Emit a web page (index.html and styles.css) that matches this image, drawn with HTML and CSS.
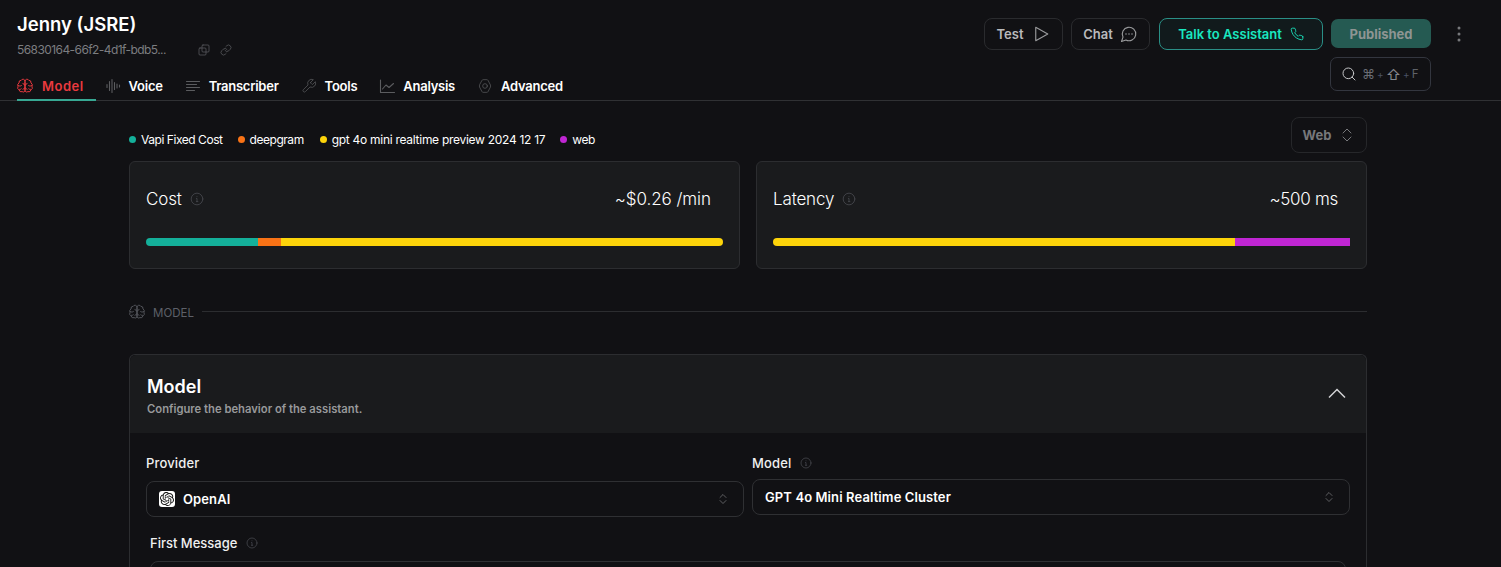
FILE: index.html
```html
<!DOCTYPE html>
<html lang="en">
<head>
<meta charset="utf-8">
<title>Jenny (JSRE)</title>
<link rel="stylesheet" href="styles.css">
</head>
<body>
<svg class="defs" width="0" height="0" aria-hidden="true">
  <symbol id="brain" viewBox="0 0 24 24"><path d="M12 4.500a3 3 0 0 0-5.600-1.100 3.500 3.500 0 0 0-3.400 4 4.200 4.200 0 0 0-1.500 5.300 3.900 3.900 0 0 0 1.600 5.200 3.600 3.600 0 0 0 4.600 2.600A3 3 0 0 0 12 19.500Z"/><path d="M12 4.500a3 3 0 0 1 5.600-1.100 3.500 3.500 0 0 1 3.400 4 4.200 4.200 0 0 1 1.500 5.300 3.900 3.900 0 0 1-1.600 5.200 3.600 3.600 0 0 1-4.600 2.600A3 3 0 0 1 12 19.500Z"/><path d="M12 10.500c-1.500 0-2.500-.8-3-2.500M12 10.500c1.500 0 2.500-.8 3-2.500"/><path d="M12 15c-1.300 0-2.300.6-3 2M12 15c1.300 0 2.300.6 3 2"/><path d="M2 11.500c1.500.8 3.200.8 4.500 0M22 11.500c-1.500.8-3.200.8-4.500 0"/><path d="M3.500 17c1 .2 2 0 2.800-.7M20.500 17c-1 .2-2 0-2.800-.7"/></symbol>
  <symbol id="info" viewBox="0 0 24 24"><circle cx="12" cy="12" r="10"/><path d="M12 16.500v-5.500h-1"/><path d="M11 16.500h2.500"/><path d="M12 7.500h.01"/></symbol>
  <symbol id="updown" viewBox="0 0 24 24"><path d="m6 15 6 6 6-6"/><path d="m6 9 6-6 6 6"/></symbol>
</svg>

<header class="topbar">
  <div class="topbar-left">
    <h1 class="title">Jenny (JSRE)</h1>
    <div class="id-row">
      <span class="id-text">56830164-66f2-4d1f-bdb5...</span>
      <svg class="ic ic-12" viewBox="0 0 24 24"><rect x="8" y="2" width="14" height="14" rx="2"/><rect x="2" y="8" width="14" height="14" rx="2"/></svg>
      <svg class="ic ic-12" viewBox="0 0 24 24"><path d="M10 13a5 5 0 0 0 7.540.540l3-3a5 5 0 0 0-7.070-7.070l-1.720 1.710"/><path d="M14 11a5 5 0 0 0-7.540-.540l-3 3a5 5 0 0 0 7.070 7.070l1.710-1.710"/></svg>
    </div>
    <nav class="tabs">
      <a class="tab tab-active"><svg class="ic ic-16"><use href="#brain"/></svg>Model</a>
      <a class="tab"><svg class="ic ic-16 ic-thin" viewBox="0 0 16 16"><path d="M2 6.500v3M4.500 3.500v9M7 1.500v13M9.500 4.500v7M12 6v4M14.500 7v2"/></svg>Voice</a>
      <a class="tab"><svg class="ic ic-16 ic-thin" viewBox="0 0 16 16"><path d="M1.500 3.500h13M1.500 6.500h10M1.500 9.500h13M1.500 12.500h8"/></svg>Transcriber</a>
      <a class="tab"><svg class="ic ic-16 ic-thin" viewBox="0 0 24 24"><path d="M14.700 6.300a1 1 0 0 0 0 1.400l1.600 1.600a1 1 0 0 0 1.400 0l3.770-3.770a6 6 0 0 1-7.940 7.940l-6.910 6.910a2.120 2.120 0 0 1-3-3l6.910-6.910a6 6 0 0 1 7.940-7.940l-3.760 3.760z"/></svg>Tools</a>
      <a class="tab"><svg class="ic ic-16 ic-thin" viewBox="0 0 16 16"><path d="M1.500 2v12.500h14"/><path d="M3.500 11l3.500-4 3 2.500 4.500-4"/></svg>Analysis</a>
      <a class="tab"><svg class="ic ic-16 ic-thin" viewBox="0 0 24 24"><path d="M7.500 3.500c.4-.7 1-1 1.700-1h5.600c.7 0 1.300.3 1.700 1l3.700 7c.3.900.3 2 0 3l-3.700 7c-.4.700-1 1-1.700 1H9.200c-.7 0-1.300-.3-1.700-1l-3.700-7c-.3-1-.3-2.100 0-3z"/><circle cx="12" cy="12" r="3.500"/></svg>Advanced</a>
    </nav>
  </div>
  <div class="topbar-right">
    <div class="actions">
      <button class="btn btn-outline">Test<svg class="ic ic-18 ic-play" viewBox="0 0 24 24"><path d="M5 3l16 9-16 9z"/></svg></button>
      <button class="btn btn-outline btn-chat">Chat<svg class="ic ic-18 ic-play" viewBox="0 0 24 24"><path d="M7.900 20A9 9 0 1 0 4 16.100L2 22z"/><path d="M8 12h.01M12 12h.01M16 12h.01" stroke-width="2"/></svg></button>
      <button class="btn btn-talk">Talk to Assistant<svg class="ic ic-14" viewBox="0 0 24 24"><path d="M22 16.920v3a2 2 0 0 1-2.180 2 19.790 19.790 0 0 1-8.630-3.070 19.500 19.500 0 0 1-6-6 19.790 19.790 0 0 1-3.070-8.670A2 2 0 0 1 4.110 2h3a2 2 0 0 1 2 1.720c.127.960.361 1.903.700 2.810a2 2 0 0 1-.450 2.110L8.090 9.910a16 16 0 0 0 6 6l1.270-1.270a2 2 0 0 1 2.110-.450c.907.339 1.850.573 2.810.700A2 2 0 0 1 22 16.920z"/></svg></button>
      <button class="btn-published">Published</button>
      <svg class="kebab" viewBox="0 0 4 16" width="4" height="16"><circle cx="2" cy="2" r="1.500"/><circle cx="2" cy="8" r="1.500"/><circle cx="2" cy="14" r="1.500"/></svg>
    </div>
    <div class="search">
      <svg class="ic ic-search" viewBox="0 0 24 24"><circle cx="11" cy="11" r="8"/><path d="m21 21-4.300-4.300"/></svg>
      <span class="keys"><span class="key-cmd">⌘</span><span class="key-plus">+</span><span class="key-shift">⇧</span><span class="key-plus">+</span><span class="key-f">F</span></span>
    </div>
  </div>
</header>

<main class="content">
  <div class="legend-row">
    <ul class="legend">
      <li><span class="dot dot-teal"></span>Vapi Fixed Cost</li>
      <li><span class="dot dot-orange"></span>deepgram</li>
      <li class="legend-long"><span class="dot dot-yellow"></span>gpt 4o mini realtime preview 2024 12 17</li>
      <li><span class="dot dot-purple"></span>web</li>
    </ul>
    <button class="web-select">Web<svg class="ic ic-16"><use href="#updown"/></svg></button>
  </div>

  <section class="metrics">
    <article class="metric">
      <div class="metric-head">
        <span class="metric-name">Cost<svg class="ic ic-14 ic-info"><use href="#info"/></svg></span>
        <span class="metric-value">~$0.26 /min</span>
      </div>
      <div class="bar bar-round">
        <span class="seg seg-teal" style="width:19.4%"></span><span class="seg seg-orange" style="width:4%"></span><span class="seg seg-yellow" style="width:76.6%"></span>
      </div>
    </article>
    <article class="metric">
      <div class="metric-head">
        <span class="metric-name">Latency<svg class="ic ic-14 ic-info"><use href="#info"/></svg></span>
        <span class="metric-value metric-value-tight">~500 ms</span>
      </div>
      <div class="bar bar-left">
        <span class="seg seg-yellow" style="width:80%"></span><span class="seg seg-purple" style="width:20%"></span>
      </div>
    </article>
  </section>

  <div class="divider">
    <svg class="ic ic-16"><use href="#brain"/></svg>
    <span class="divider-label">MODEL</span>
    <span class="divider-line"></span>
  </div>

  <section class="panel">
    <div class="panel-head">
      <div>
        <h2 class="panel-title">Model</h2>
        <p class="panel-sub">Configure the behavior of the assistant.</p>
      </div>
      <svg class="chevron" viewBox="0 0 20 12" width="20" height="12"><path d="M2 10.500 10 2.500l8 8"/></svg>
    </div>
    <div class="panel-body">
      <div class="fields">
        <div class="field">
          <label class="field-label field-label-provider">Provider</label>
          <div class="select select-provider">
            <span class="select-value">
              <span class="logo"><svg viewBox="0 0 24 24" width="14" height="14"><path d="M22.2819 9.8211a5.9847 5.9847 0 0 0-.5157-4.9108 6.0462 6.0462 0 0 0-6.5098-2.9A6.0651 6.0651 0 0 0 4.9807 4.1818a5.9847 5.9847 0 0 0-3.9977 2.9 6.0462 6.0462 0 0 0 .7427 7.0966 5.98 5.98 0 0 0 .511 4.9107 6.051 6.051 0 0 0 6.5146 2.9001A5.9847 5.9847 0 0 0 13.2599 24a6.0557 6.0557 0 0 0 5.7718-4.2058 5.9894 5.9894 0 0 0 3.9977-2.9001 6.0557 6.0557 0 0 0-.7475-7.0729zm-9.022 12.6081a4.4755 4.4755 0 0 1-2.8764-1.0408l.1419-.0804 4.7783-2.7582a.7948.7948 0 0 0 .3927-.6813v-6.7369l2.02 1.1686a.071.071 0 0 1 .038.052v5.5826a4.504 4.504 0 0 1-4.4945 4.4944zm-9.6607-4.1254a4.4708 4.4708 0 0 1-.5346-3.0137l.142.0852 4.783 2.7582a.7712.7712 0 0 0 .7806 0l5.8428-3.3685v2.3324a.0804.0804 0 0 1-.0332.0615L9.74 19.9502a4.4992 4.4992 0 0 1-6.1408-1.6464zM2.3408 7.8956a4.485 4.485 0 0 1 2.3655-1.9728V11.6a.7664.7664 0 0 0 .3879.6765l5.8144 3.3543-2.0201 1.1685a.0757.0757 0 0 1-.071 0l-4.8303-2.7865A4.504 4.504 0 0 1 2.3408 7.872zm16.5963 3.8558L13.1038 8.364 15.1192 7.2a.0757.0757 0 0 1 .071 0l4.8303 2.7913a4.4944 4.4944 0 0 1-.6765 8.1042v-5.6772a.79.79 0 0 0-.407-.667zm2.0107-3.0231l-.142-.0852-4.7735-2.7818a.7759.7759 0 0 0-.7854 0L9.409 9.2297V6.8974a.0662.0662 0 0 1 .0284-.0615l4.8303-2.7866a4.4992 4.4992 0 0 1 6.6802 4.66zM8.3065 12.863l-2.02-1.1638a.0804.0804 0 0 1-.038-.0567V6.0742a4.4992 4.4992 0 0 1 7.3757-3.4537l-.142.0805L8.704 5.459a.7948.7948 0 0 0-.3927.6813zm1.0976-2.3654l2.602-1.4998 2.6069 1.4998v2.9994l-2.5974 1.4997-2.6067-1.4997Z"/></svg></span>
              OpenAI
            </span>
            <svg class="ic ic-12 ic-updown"><use href="#updown"/></svg>
          </div>
        </div>
        <div class="field">
          <label class="field-label">Model<svg class="ic ic-12 ic-info-sm"><use href="#info"/></svg></label>
          <div class="select">
            <span class="select-value">GPT 4o Mini Realtime Cluster</span>
            <svg class="ic ic-12 ic-updown"><use href="#updown"/></svg>
          </div>
        </div>
      </div>
      <div class="first-message">
        <label class="field-label">First Message<svg class="ic ic-12 ic-info-sm"><use href="#info"/></svg></label>
        <div class="textarea"></div>
      </div>
    </div>
  </section>
</main>
</body>
</html>
```

FILE: styles.css
```css
* { box-sizing: border-box; }
html, body { margin: 0; height: 567px; overflow: hidden; }
body {
  background: #111114;
  color: #fff;
  font-family: Inter, "Noto Sans", sans-serif;
  font-size: 13px;
}
.defs { position: absolute; }
.ic { fill: none; stroke: currentColor; stroke-width: 1.5; stroke-linecap: round; stroke-linejoin: round; flex: none; }
.ic-12 { width: 12px; height: 12px; }
.ic-14 { width: 14px; height: 14px; }
.ic-16 { width: 16px; height: 16px; }
.ic-18 { width: 18px; height: 18px; }
.ic-thin { stroke-width: 1.1; }

.topbar {
  height: 101px;
  border-bottom: 1px solid #303134;
  padding: 0 42px 0 17px;
  display: flex;
  justify-content: space-between;
}
.topbar-left { display: flex; flex-direction: column; }
.title { margin: 13px 0 0; font-size: 18.500px; line-height: 22px; font-weight: 600; }
.id-row { margin-top: 8px; height: 14px; display: flex; align-items: center; color: #5b5c60; }
.id-text { font-size: 12px; line-height: 14px; letter-spacing: -0.580px; width: 181px; color: #7c7d80; }
.id-row .ic { margin-right: 10px; }
.tabs { margin-top: 15px; display: flex; gap: 10px; }
.tab {
  height: 29px;
  padding: 0 12px 0 0;
  display: flex;
  align-items: center;
  gap: 8px;
  font-size: 13px;
  font-weight: 600;
  letter-spacing: -0.250px;
  color: #fff;
  border-bottom: 2px solid transparent;
}
.tab .ic { color: #5b5c5f; }
.tab-active { gap: 9px; margin-right: -1px; letter-spacing: 0.500px; color: #ea3a3f; border-bottom-color: #37a893; }
.tab-active .ic { color: #ea3a3f; }

.topbar-right { display: flex; flex-direction: column; align-items: flex-end; padding-top: 18px; }
.actions { display: flex; align-items: flex-start; height: 32px; }
.btn {
  height: 32px;
  border-radius: 8px;
  font: 600 13px Inter, sans-serif;
  display: flex;
  align-items: center;
  justify-content: center;
  background: transparent;
}
.btn-outline { width: 79px; margin-right: 8px; gap: 9px; border: 1px solid #2a2b2e; color: #b9babc; }
.ic-play { color: #9a9b9d; }
.btn-chat { gap: 7px; margin-right: 9px; }
.btn-talk { width: 164px; margin-right: 8px; gap: 8px; border: 1px solid #2a8f86; background: #111a1c; color: #19e8c0; }
.btn-published {
  width: 100px;
  height: 29px;
  margin-top: 1px;
  border: 0;
  border-radius: 7px;
  background: #255a52;
  color: #8e9593;
  font: 700 13px Inter, sans-serif;
}
.kebab { fill: #77787b; margin: 8px -2px 0 26px; }
.search {
  margin-top: 7px;
  margin-right: 28px;
  width: 101px;
  height: 34px;
  border: 1px solid #33363f;
  border-radius: 7px;
  display: flex;
  align-items: center;
  padding-left: 10px;
  gap: 5px;
  color: #5f6268;
}
.ic-search { color: #c4c5c7; width: 16px; height: 16px; }
.keys { display: flex; align-items: center; gap: 2px; white-space: nowrap; font-size: 11px; }
.key-cmd { font-size: 13px; color: #6a6d75; }
.key-plus { font-size: 10px; color: #4a5266; }
.key-shift { font-size: 15px; color: #85878c; }
.key-f { font-size: 11.500px; color: #5f6268; }

.content { width: 1238px; margin-left: 129px; }
.legend-row { height: 60px; padding-top: 16px; display: flex; justify-content: space-between; }
.legend { list-style: none; margin: 4px 0 0; padding: 0; display: flex; gap: 15px; height: 36px; align-items: center; }
.legend li { display: flex; align-items: center; gap: 5px; font-size: 12px; letter-spacing: -0.450px; color: #fff; }
.legend .legend-long { gap: 5px; margin-left: 1px; letter-spacing: -0.280px; }
.dot { width: 7px; height: 7px; border-radius: 50%; }
.dot-teal { background: #14b09a; }
.dot-orange { background: #f97316; }
.dot-yellow { background: #fdd40a; }
.dot-purple { background: #c026d3; }
.web-select {
  width: 76px;
  height: 36px;
  border: 1px solid #26272a;
  border-radius: 8px;
  background: transparent;
  color: #77787b;
  font: 700 13px Inter, sans-serif;
  display: flex;
  align-items: center;
  justify-content: center;
  gap: 8px;
}

.metrics { display: grid; grid-template-columns: 611px 611px; gap: 16px; }
.metric {
  height: 108px;
  background: #1a1b1d;
  border: 1px solid #2c2d30;
  border-radius: 6px;
  padding: 25px 16px 0;
}
.metric-head { height: 24px; display: flex; justify-content: space-between; align-items: center; padding-right: 12px; }
.metric-name { display: flex; align-items: center; gap: 8px; font-size: 17px; font-weight: 300; letter-spacing: -0.150px; }
.metric-value { font-size: 17px; font-weight: 300; letter-spacing: -0.050px; }
.metric-value-tight { letter-spacing: -0.300px; }
.ic-info { color: #484a50; stroke-width: 1.400; }
.bar { display: flex; height: 8px; margin-top: 27px; overflow: hidden; }
.bar-round { border-radius: 4px; }
.bar-left { border-radius: 4px 0 0 4px; }
.seg { display: block; height: 100%; }
.seg-teal { background: #14b09a; }
.seg-orange { background: #f97316; }
.seg-yellow { background: #fdd40a; }
.seg-purple { background: #c026d3; }

.divider { margin-top: 35px; height: 16px; display: flex; align-items: center; color: #53555b; }
.divider-label { margin-left: 8px; padding-top: 2px; font-size: 11.500px; color: #5d6068; }
.divider-line { flex: 1; height: 1px; background: #2c2d30; margin-left: 8px; margin-top: -1px; }

.panel { margin-top: 34px; border: 1px solid #2c2d30; border-bottom: 0; border-radius: 6px 6px 0 0; }
.panel-head {
  height: 78px;
  background: #1a1b1d;
  padding: 21px 19px 0 17px;
  display: flex;
  justify-content: space-between;
  border-radius: 6px 6px 0 0;
}
.panel-title { margin: 0; font-size: 18px; line-height: 22px; font-weight: 600; }
.panel-sub { margin: 4px 0 0; font-size: 11.260px; line-height: 14px; font-weight: 600; color: #98999b; }
.chevron { fill: none; stroke: #d4d4d6; stroke-width: 1.500; margin-top: 11px; }
.panel-body { padding: 21px 16px 0; }
.fields { display: grid; grid-template-columns: 598px 598px; gap: 8px; }
.field-label { display: flex; align-items: center; gap: 9px; height: 18px; font-size: 13px; font-weight: 500; letter-spacing: 0.150px; color: #f0f0f0; }
.select {
  margin-top: 7px;
  height: 36px;
  border: 1px solid #2f3033;
  border-radius: 8px;
  display: flex;
  align-items: center;
  justify-content: space-between;
  padding: 0 14px 0 12px;
}
.field-label-provider + .select-provider { margin-top: 9px; }
.select-value { display: flex; align-items: center; gap: 8px; font-size: 13px; font-weight: 600; letter-spacing: 0.100px; color: #fff; }
.logo { width: 16px; height: 16px; border-radius: 3px; background: #fff; display: flex; align-items: center; justify-content: center; }
.logo svg { fill: #111; }
.ic-updown { color: #77787b; }
.ic-info-sm { color: #484a50; }
.first-message { padding: 0 4px; margin-top: 17px; }
.first-message .field-label { letter-spacing: 0; }
.textarea { margin-top: 9px; height: 60px; width: 1196px; border: 1px solid #2f3033; border-radius: 8px; }
```
